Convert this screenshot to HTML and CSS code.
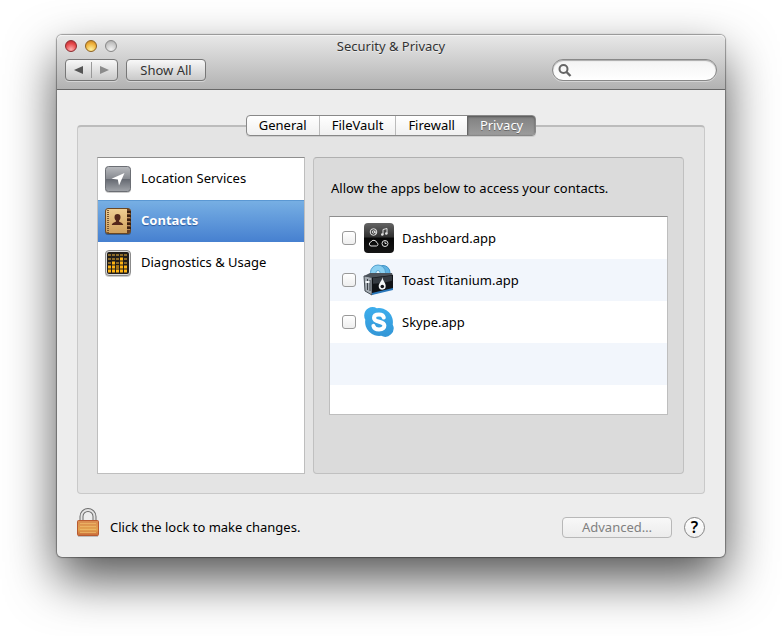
FILE: index.html
```html
<!DOCTYPE html>
<html lang="en">
<head>
    <meta charset="UTF-8">
    <title>Security &amp; Privacy</title>
    <meta name="viewport" content="width=device-width, initial-scale=1.0">
    <link rel="stylesheet" href="styles.css">
</head>
<body>
    <main class="window">
        <header class="toolbar">
            <div class="titlebar">
                <div class="lights">
                    <button class="light red" aria-label="Close"></button>
                    <button class="light yellow" aria-label="Minimize"></button>
                    <button class="light gray" aria-label="Zoom" disabled></button>
                </div>
                <h1 class="title">Security &amp; Privacy</h1>
            </div>
            <div class="tools">
                <div class="nav">
                    <button class="nav-btn" aria-label="Back">
                        <svg width="10" height="8" viewBox="0 0 10 8"><path d="M9 0v8L0 4z" fill="#555"/></svg>
                    </button>
                    <button class="nav-btn" aria-label="Forward">
                        <svg width="10" height="8" viewBox="0 0 10 8"><path d="M0 0v8l9-4z" fill="#8b8b8b"/></svg>
                    </button>
                </div>
                <button class="show-all">Show All</button>
                <label class="search">
                    <svg width="14" height="14" viewBox="0 0 14 14" fill="none" stroke="#666">
                        <circle cx="5.5" cy="6" r="4" stroke-width="2"/>
                        <path d="M8.5 9l4 4" stroke-width="2.4"/>
                    </svg>
                    <input type="search" aria-label="Search">
                </label>
            </div>
        </header>

        <div class="content">
            <nav class="tabs">
                <button class="tab">General</button>
                <button class="tab">FileVault</button>
                <button class="tab">Firewall</button>
                <button class="tab active">Privacy</button>
            </nav>

            <section class="panel">
                <div class="services">
                    <button class="service">
                        <svg width="28" height="28" viewBox="0 0 28 28">
                            <defs>
                                <linearGradient id="loc" x2="0" y2="1">
                                    <stop offset="0" stop-color="#b9bbbf"/>
                                    <stop offset=".48" stop-color="#888b91"/>
                                    <stop offset=".52" stop-color="#666a72"/>
                                    <stop offset="1" stop-color="#a2a5aa"/>
                                </linearGradient>
                            </defs>
                            <rect x="1" y="2" width="26" height="26" rx="4" fill="#0003"/>
                            <rect x="1.5" y="1.5" width="25" height="25" rx="3" fill="url(#loc)" stroke="#6b6e74"/>
                            <path d="M20.5 8L15 20.5l-1.2-6-6.300-.8z" fill="#fff"/>
                        </svg>
                        Location Services
                    </button>
                    <button class="service selected">
                        <svg width="28" height="28" viewBox="0 0 28 28">
                            <defs>
                                <linearGradient id="book" x2="0" y2="1">
                                    <stop offset="0" stop-color="#f0cf94"/>
                                    <stop offset="1" stop-color="#cfa05c"/>
                                </linearGradient>
                            </defs>
                            <rect x="1" y="2" width="26" height="26" rx="3" fill="#0005"/>
                            <rect x="1.5" y="1.5" width="25" height="25" rx="2.5" fill="url(#book)" stroke="#6b4722"/>
                            <path d="M4 3v23" stroke="#7a5630" stroke-width="2" stroke-dasharray="1 1"/>
                            <path d="M23 2h2q1 0 1 1v22q0 1-1 1h-2z" fill="#6b4024"/>
                            <path d="M23 5h4M23 9h4M23 13h4M23 17h4M23 21h4" stroke="#2b1509" stroke-width="1.5"/>
                            <path d="M23 6.500h3M23 10.500h3M23 14.500h3M23 18.500h3M23 22.500h3" stroke="#b88a58"/>
                            <path d="M13.500 7c2 0 3 1.200 3 3.200 0 1.600-.7 2.500-1.400 3.200v1.100c0 .8 3.900 1 4.100 3.500H7.800c.2-2.500 4.100-2.700 4.100-3.500v-1.100c-.7-.7-1.400-1.600-1.400-3.200 0-2 1-3.200 3-3.200z" fill="#54271a"/>
                        </svg>
                        Contacts
                    </button>
                    <button class="service">
                        <svg width="28" height="28" viewBox="0 0 28 28">
                            <rect x="1" y="2" width="26" height="26" rx="4" fill="#0003"/>
                            <rect x="1.5" y="1.5" width="25" height="25" rx="3.5" fill="#dcdcdc" stroke="#8b8b8b"/>
                            <rect x="3" y="3" width="22" height="22" rx="2" fill="#211d19"/>
                            <g stroke-width="2" stroke-dasharray="3 1" fill="none">
                                <path d="M4 6h20M4 10h20M4 14h20" stroke="#8b6a28"/>
                                <path d="M4 18h20M4 22h20" stroke="#ffb412" stroke-width="3"/>
                                <path d="M16 10h3M8 14h3M16 14h3" stroke="#ffb412" stroke-width="3"/>
                                <path d="M12 18h3" stroke="#a5751a" stroke-width="3"/>
                            </g>
                        </svg>
                        Diagnostics &amp; Usage
                    </button>
                </div>

                <div class="pane">
                    <p class="hint">Allow the apps below to access your contacts.</p>
                    <ul class="apps">
                        <li>
                            <label class="app">
                                <input type="checkbox">
                                <svg width="32" height="32" viewBox="0 0 32 32">
                                    <defs>
                                        <linearGradient id="dash" x2="0" y2="1">
                                            <stop offset="0" stop-color="#646464"/>
                                            <stop offset=".47" stop-color="#303030"/>
                                            <stop offset=".5" stop-color="#070707"/>
                                            <stop offset="1" stop-color="#151515"/>
                                        </linearGradient>
                                    </defs>
                                    <rect x="1" y="1" width="30" height="30" rx="4" fill="url(#dash)"/>
                                    <g fill="none" stroke="#e2e2e2">
                                        <circle cx="10.5" cy="10" r="3.3"/>
                                        <circle cx="10.5" cy="10" r="1.2"/>
                                        <path d="M12 8.500v2.500h1.500M20 12.500v-5l4-1v5"/>
                                        <path d="M8 24h5.500a1.700 1.700 0 0 0 .3-3.300 3.200 3.200 0 0 0-6-.6A2 2 0 0 0 8 24z"/>
                                        <circle cx="22" cy="21.5" r="3"/>
                                        <path d="M22 19.500v2h1.500"/>
                                    </g>
                                    <circle cx="19.3" cy="12.5" r="1.300" fill="#e2e2e2"/>
                                    <circle cx="23.3" cy="11.5" r="1.300" fill="#e2e2e2"/>
                                </svg>
                                Dashboard.app
                            </label>
                        </li>
                        <li>
                            <label class="app">
                                <input type="checkbox">
                                <svg width="32" height="32" viewBox="0 0 32 32">
                                    <circle cx="20" cy="8.5" r="7" fill="#5fb2e2" stroke="#3f93c6"/>
                                    <circle cx="15" cy="8.5" r="7.500" fill="#8bd0f1" stroke="#4e9dcc"/>
                                    <circle cx="15" cy="8.5" r="2" fill="#e3f5fd" stroke="#5aa8d4"/>
                                    <path d="M1 12l8 1v18l-7-4z" fill="#a4abb2" stroke="#444b52"/>
                                    <path d="M1 12l6-3 22 0 1 3-21 2z" fill="#4c535b"/>
                                    <path d="M9 13.500L30 11v14L9 30.500z" fill="#101317"/>
                                    <path d="M10 14l19-2.300v5q-9 3-19 3z" fill="#343a41"/>
                                    <path d="M9 29l21-5v2L9 31z" fill="#2a79bd"/>
                                    <path d="M4.500 15v11M7 16v11" stroke="#3a4046"/>
                                    <path d="M2.500 18h4" stroke="#f1f4f6" stroke-width="2"/>
                                    <path d="M19.500 12.500c-.5 3.500 3.300 6 3.200 9.500a3.500 3.500 0 0 1-7 .3c0-3.300 3.600-5.300 3.800-9.800z" fill="#f3f6f8"/>
                                    <circle cx="19.300" cy="22.500" r="1.800" fill="#14171c"/>
                                </svg>
                                Toast Titanium.app
                            </label>
                        </li>
                        <li>
                            <label class="app">
                                <input type="checkbox">
                                <svg width="32" height="32" viewBox="0 0 32 32">
                                    <defs>
                                        <linearGradient id="sky" x2="0" y2="1">
                                            <stop offset="0" stop-color="#3daeed"/>
                                            <stop offset="1" stop-color="#3396d6"/>
                                        </linearGradient>
                                    </defs>
                                    <path d="M9.500 1a8.500 8.500 0 0 1 4.300 1.200A14 14 0 0 1 29.700 18.500 8.500 8.500 0 0 1 18.200 29.800 14 14 0 0 1 2.300 13.700 8.500 8.500 0 0 1 9.500 1z" fill="url(#sky)"/>
                                    <path d="M20.800 11.500C20.200 9.300 18.500 8.600 16 8.600c-3 0-5 1.300-5 3.400 0 4.900 10.400 2.600 10.400 7.600 0 2.500-2.300 3.800-5.400 3.800-3 0-5-1.200-5.600-3.500" fill="none" stroke="#fff" stroke-width="4" stroke-linecap="round"/>
                                </svg>
                                Skype.app
                            </label>
                        </li>
                    </ul>
                </div>
            </section>

            <footer class="footer">
                <button class="lock" aria-label="Lock">
                    <svg width="22" height="30" viewBox="0 0 22 30">
                        <defs>
                            <linearGradient id="brass" x2="0" y2="1">
                                <stop offset="0" stop-color="#d98a50"/>
                                <stop offset=".6" stop-color="#e2a24d"/>
                                <stop offset="1" stop-color="#c8693a"/>
                            </linearGradient>
                        </defs>
                        <path d="M4.500 13V8.500a6.500 6.500 0 0 1 13 0V13" fill="none" stroke="#6d6d6d" stroke-width="4"/>
                        <path d="M4.500 13V8.500a6.500 6.500 0 0 1 13 0V13" fill="none" stroke="#e3e3e3" stroke-width="2"/>
                        <rect x="1" y="27" width="20" height="2" fill="#0003"/>
                        <rect x=".5" y="12.5" width="21" height="15" rx="1" fill="url(#brass)" stroke="#b85a30"/>
                        <path d="M3 15.500h16M3 18.500h16M3 21.500h16M3 24.500h16" stroke="#efbd6c" stroke-opacity=".7"/>
                    </svg>
                </button>
                <span class="lock-text">Click the lock to make changes.</span>
                <button class="advanced" disabled>Advanced…</button>
                <button class="help" aria-label="Help">?</button>
            </footer>
        </div>
    </main>
</body>
</html>
```
FILE: styles.css
```css
html { box-sizing: border-box; }
*, *:before, *:after { box-sizing: inherit; }
body {
    margin: 0;
    padding: 35px 57px 79px;
    background: #fff;
    color: #000;
    font-family: "Lucida Grande", "Noto Sans", sans-serif;
    font-size: 13px;
    line-height: 20px;
}
button, input {
    font: inherit;
    color: inherit;
    margin: 0;
    padding: 0;
}
svg {
    display: block;
    flex: none;
}
.window {
    background: #ededed;
    border-radius: 5px;
    box-shadow: 0 0 1px 1px rgba(0, 0, 0, 0.35), 0 22px 50px rgba(0, 0, 0, 0.68);
}

/* toolbar */
.toolbar {
    padding: 0 8px 8px;
    border-bottom: 1px solid #686868;
    border-radius: 5px 5px 0 0;
    background: linear-gradient(#e8e8e8, #b2b2b2);
    box-shadow: inset 0 1px #f4f4f4;
}
.titlebar {
    display: grid;
    grid-template-columns: 1fr auto 1fr;
    align-items: center;
    height: 22px;
    margin-bottom: 2px;
}
.lights {
    display: flex;
    gap: 8px;
}
.light {
    width: 12px;
    height: 12px;
    border: 1px solid #7d7d7d;
    border-radius: 50%;
}
.red {
    background: radial-gradient(circle at 50% 85%, #ffb0b0, #e5484b 60%, #b3262c);
    border-color: #8b2a2e;
}
.yellow {
    background: radial-gradient(circle at 50% 85%, #fff2a0, #efb23c 60%, #bf7a1d);
    border-color: #8d6220;
}
.gray {
    background: radial-gradient(circle at 50% 85%, #f2f2f2, #c8c8c8 60%, #a5a5a5);
    border-color: #888;
}
.title {
    margin: 0;
    font-size: 13px;
    font-weight: normal;
    color: #333;
    text-shadow: 0 1px rgba(255, 255, 255, 0.5);
}
.tools {
    display: flex;
    gap: 8px;
}
.nav, .show-all {
    height: 22px;
    border: 1px solid #777;
    border-radius: 4px;
    background: linear-gradient(#f8f8f8, #c9c9c9);
    box-shadow: 0 1px rgba(255, 255, 255, 0.4);
}
.nav {
    display: flex;
    align-items: center;
    width: 53px;
}
.nav-btn {
    display: flex;
    flex: 1;
    align-items: center;
    justify-content: center;
    height: 16px;
    border: 0;
    background: none;
}
.nav-btn + .nav-btn { border-left: 1px solid #999; }
.show-all {
    width: 80px;
    color: #333;
}
.search {
    display: flex;
    align-items: center;
    gap: 4px;
    width: 165px;
    height: 22px;
    margin-left: auto;
    padding: 0 5px;
    border: 1px solid #888;
    border-radius: 11px;
    background: linear-gradient(#f3f3f3, #fff);
    box-shadow: inset 0 1px 1px #aaa, 0 1px rgba(255, 255, 255, 0.4);
}
.search input {
    flex: 1;
    min-width: 0;
    border: 0;
    outline: 0;
    background: none;
    appearance: none;
}

/* tabs */
.content { padding: 25px 20px 19px; }
.tabs {
    position: relative;
    display: flex;
    width: max-content;
    margin: 0 auto -11px;
    border: 1px solid #888;
    border-radius: 4px;
    background: linear-gradient(#fff, #f0f0f0);
    box-shadow: 0 1px rgba(0, 0, 0, 0.1);
}
.tab {
    height: 19px;
    padding: 0 12px;
    border: 0;
    background: none;
    line-height: 19px;
}
.tab + .tab { border-left: 1px solid #bbb; }
.tab + .tab.active {
    border-left-color: #666;
    border-radius: 0 3px 3px 0;
    background: linear-gradient(#808080, #9c9c9c);
    box-shadow: inset 0 1px 2px #555;
    color: #fff;
    text-shadow: 0 1px #666;
}

/* panel */
.panel {
    display: flex;
    gap: 8px;
    padding: 30px 20px 19px 19px;
    border: 1px solid #c9c9c9;
    border-top: 2px solid #bcbcbc;
    border-radius: 4px;
    background: #e4e4e4;
}
.services {
    flex: 0 0 208px;
    border: 1px solid #bebebe;
    border-top-color: #8e8e8e;
    background: #fff;
}
.service {
    display: flex;
    align-items: center;
    gap: 9px;
    width: 100%;
    height: 42px;
    padding: 0 6px 2px;
    border: 0;
    background: none;
    text-align: left;
}
.service svg { margin-top: 2px; }
.selected {
    background: linear-gradient(#78b0e4, #4680d0);
    box-shadow: inset 0 1px #5b98d3;
    color: #fff;
    font-weight: bold;
    text-shadow: 0 1px 1px #2c5a9c;
}
.pane {
    flex: 1;
    padding: 20px 15px 58px;
    border: 1px solid #c0c0c0;
    border-top-color: #b0b0b0;
    border-radius: 4px;
    background: #dbdbdb;
}
.hint { margin: 0 2px 18px; }
.apps {
    min-height: 199px;
    margin: 0;
    padding: 0;
    border: 1px solid #bebebe;
    border-top-color: #8e8e8e;
    /* stripes go on below the last app */
    background: repeating-linear-gradient(#fff 0 42px, #f2f6fc 42px 84px);
    list-style: none;
}
.app {
    display: flex;
    align-items: center;
    height: 42px;
    padding-left: 12px;
}
.app svg { margin: 0 7px; }
.app input {
    width: 14px;
    height: 14px;
    border: 1px solid #999;
    border-radius: 3px;
    background: linear-gradient(#fff, #eee);
    appearance: none;
}
.app input:checked { background: #4680d0; }

/* footer */
.footer {
    display: flex;
    align-items: center;
    padding-top: 14px;
}
.lock {
    border: 0;
    background: none;
}
.lock-text { margin: 8px auto 0 11px; }
.advanced {
    width: 110px;
    height: 21px;
    margin: 8px 12px 0 0;
    border: 1px solid #b8b8b8;
    border-radius: 4px;
    background: linear-gradient(#f8f8f8, #ececec);
    color: #808080;
    line-height: 19px;
}
.help {
    width: 21px;
    height: 21px;
    margin-top: 8px;
    border: 1px solid #858585;
    border-radius: 50%;
    background: linear-gradient(#fff, #f0f0f0);
    font-size: 16px;
    font-weight: 600;
    line-height: 19px;
}
```
